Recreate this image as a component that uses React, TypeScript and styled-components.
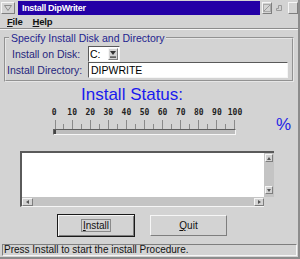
import React from 'react';
import styled, { createGlobalStyle } from 'styled-components';

const BG = '#d3d3d3';
const HI = '#f6f6f6';
const LO = '#7e7e7e';

const GlobalStyle = createGlobalStyle`
  html, body {
    margin: 0;
    padding: 0;
    background: ${BG};
  }
  body {
    font-family: "Liberation Sans", Arial, sans-serif;
  }
`;

const Window = styled.div`
  width: 300px;
  height: 259px;
  box-sizing: border-box;
  background: ${BG};
  display: flex;
  flex-direction: column;
  border-right: 2px solid #8c8c8c;
  border-bottom: 2px solid #8c8c8c;
  overflow: hidden;
`;

const TitleBar = styled.div`
  height: 15px;
  flex: none;
  display: flex;
  align-items: center;
  padding-left: 1px;
`;

const FrameButton = styled.div<{ $w: number; $ml?: number }>`
  width: ${(p) => p.$w}px;
  height: 12px;
  margin-left: ${(p) => p.$ml ?? 0}px;
  box-sizing: border-box;
  display: flex;
  align-items: center;
  justify-content: center;
  border: 1px solid;
  border-color: ${HI} ${LO} ${LO} ${HI};
`;

const TitleText = styled.div`
  width: 243px;
  height: 14px;
  margin-left: 3px;
  box-sizing: border-box;
  background: #2300a6;
  color: #fff;
  font-weight: bold;
  font-size: 9px;
  line-height: 14px;
  padding-left: 4px;
  letter-spacing: -0.3px;
`;

const MenuBar = styled.div`
  height: 13px;
  flex: none;
  display: flex;
  align-items: center;
  gap: 10px;
  padding-left: 7px;
  border-bottom: 1px solid #8c8c8c;
  box-shadow: 0 1px 0 ${HI};
`;

const MenuItem = styled.span`
  font-size: 9.5px;
  font-weight: bold;
  color: #111;
  letter-spacing: -0.2px;

  u {
    text-decoration: underline;
    text-underline-offset: 1px;
  }
`;

const Group = styled.fieldset`
  margin: 3px 4px 0 4px;
  padding: 2px 4px 2px 1px;
  border: 2px groove #e6e6e6;
  display: flex;
  flex-direction: column;
  flex: none;
`;

const Legend = styled.legend`
  margin-left: 2px;
  padding: 0 2px;
  font-size: 10.5px;
  line-height: 12px;
  color: #24248e;
`;

const FieldRow = styled.div`
  display: flex;
  align-items: center;
  height: 16px;
`;

const FieldLabel = styled.label<{ $indent: number }>`
  width: 81px;
  box-sizing: border-box;
  padding-left: ${(p) => p.$indent}px;
  font-size: 10.5px;
  color: #26267c;
  white-space: nowrap;
`;

const Sunken = styled.div`
  box-sizing: border-box;
  height: 16px;
  border: 1px solid;
  border-color: #5a5a5a ${HI} ${HI} #5a5a5a;
  background: #fff;
  display: flex;
  align-items: center;
`;

const Combo = styled(Sunken)`
  width: 32px;
  padding-left: 1px;
  font-size: 10.5px;
  justify-content: space-between;
`;

const ComboArrow = styled.div`
  width: 10px;
  height: 12px;
  box-sizing: border-box;
  margin-right: 1px;
  background: ${BG};
  border: 1px solid;
  border-color: ${HI} ${LO} ${LO} ${HI};
  display: flex;
  align-items: center;
  justify-content: center;
`;

const TextField = styled(Sunken)`
  flex: 1;
  padding-left: 2px;
  font-size: 10.5px;
  color: #000;
`;

const StatusHeading = styled.div`
  margin-top: 3px;
  padding-left: 81px;
  font-size: 17px;
  line-height: 19px;
  color: #1a1aee;
  flex: none;
`;

const ScaleRow = styled.div`
  display: flex;
  align-items: flex-end;
  margin-top: 4px;
  flex: none;
`;

const Scale = styled.div`
  margin-left: 45px;
  display: flex;
  flex-direction: column;
`;

const ScaleLabels = styled.div`
  display: flex;
  height: 10px;
`;

const ScaleNum = styled.span`
  width: 18.1px;
  text-align: center;
  font-family: "DejaVu Sans Mono", "Liberation Mono", monospace;
  font-weight: bold;
  font-size: 8px;
  line-height: 10px;
  color: #222;
`;

const Ticks = styled.svg`
  display: block;
  margin: 2px 0 0 8px;
`;

const Trough = styled.div`
  margin-left: 8px;
  width: 183px;
  height: 6px;
  box-sizing: border-box;
  border: 1px solid;
  border-color: #5e5e5e ${HI} ${HI} #5e5e5e;
  background: #bdbdbd;
  display: flex;
`;

const Thumb = styled.div`
  width: 2px;
  background: #444;
`;

const Percent = styled.span`
  margin: 0 0 2px 32px;
  font-size: 17px;
  line-height: 17px;
  color: #2424e6;
`;

const LogBox = styled.div`
  margin: 16px 24px 0 20px;
  height: 56px;
  flex: none;
  display: grid;
  grid-template-columns: 1fr 10px;
  grid-template-rows: 46px 10px;
`;

const LogArea = styled.div`
  background: #fff;
  border-top: 2px solid #5a5a5a;
  border-left: 2px solid #5a5a5a;
`;

const VScroll = styled.div`
  border-top: 2px solid #5a5a5a;
  background: #c4c4c4;
  display: flex;
  flex-direction: column;
  justify-content: space-between;
  padding: 1px 0 3px 1px;
`;

const HScroll = styled.div`
  background: #c4c4c4;
  border-left: 2px solid #5a5a5a;
  border-bottom: 1px solid ${HI};
  display: flex;
  justify-content: space-between;
  align-items: center;
`;

const Corner = styled.div`
  background: ${BG};
`;

const ArrowBtn = styled.div<{ $w: number; $h: number }>`
  width: ${(p) => p.$w}px;
  height: ${(p) => p.$h}px;
  box-sizing: border-box;
  background: ${BG};
  border: 1px solid;
  border-color: ${HI} ${LO} ${LO} ${HI};
  display: flex;
  align-items: center;
  justify-content: center;
`;

const ButtonRow = styled.div`
  display: flex;
  align-items: center;
  gap: 15px;
  margin-top: 7px;
  padding-left: 57px;
  flex: none;
`;

const Button = styled.button<{ $default?: boolean }>`
  width: ${(p) => (p.$default ? 78 : 77)}px;
  height: ${(p) => (p.$default ? 23 : 21)}px;
  box-sizing: border-box;
  padding: 0;
  font-family: "Liberation Sans", Arial, sans-serif;
  font-size: 10px;
  color: #111;
  background: ${BG};
  border: 1px solid;
  border-color: ${(p) => (p.$default ? '#1a1a1a' : `${HI} ${LO} ${LO} ${HI}`)};
  box-shadow: ${(p) =>
    p.$default ? `inset 1px 1px 0 ${HI}, inset -1px -1px 0 ${LO}` : 'none'};
  display: flex;
  align-items: center;
  justify-content: center;

  u {
    text-underline-offset: 1px;
  }
`;

const Focus = styled.span`
  outline: 1px solid #8a8a8a;
  padding: 0 1px;
`;

const StatusBar = styled.div`
  margin: 7px 1px 0 2px;
  height: 12px;
  flex: none;
  box-sizing: border-box;
  border: 1px solid;
  border-color: ${LO} ${HI} ${HI} ${LO};
  padding-left: 1px;
  font-size: 10px;
  line-height: 10px;
  color: #111;
  white-space: nowrap;
`;

const tickXs = Array.from({ length: 21 }, (_, i) => 2 + i * 8.95);

export default function App() {
  return (
    <>
      <GlobalStyle />
      <Window>
        <TitleBar>
          <FrameButton $w={14}>
            <svg width="8" height="6" viewBox="0 0 8 6">
              <path d="M0.5 0.5h7L4 5.5z" fill="none" stroke="#8a8a8a" />
            </svg>
          </FrameButton>
          <TitleText>Install DipWriter</TitleText>
          <FrameButton $w={10} $ml={2}>
            <svg width="8" height="8" viewBox="0 0 8 8">
              <path d="M1 7L7 1" stroke="#999" />
              <rect x="0.5" y="0.5" width="7" height="7" fill="none" stroke="#aaa" />
            </svg>
          </FrameButton>
          <svg width="8" height="10" viewBox="0 0 8 10" style={{ marginLeft: 4 }}>
            <path d="M2.5 2.5h3v5h-5v-2h2z" fill="none" stroke="#999" />
          </svg>
          <FrameButton $w={10} $ml={4} />
        </TitleBar>

        <MenuBar>
          <MenuItem>
            <u>F</u>ile
          </MenuItem>
          <MenuItem>
            <u>H</u>elp
          </MenuItem>
        </MenuBar>

        <Group>
          <Legend>Specify Install Disk and Directory</Legend>
          <FieldRow>
            <FieldLabel $indent={5}>Install on Disk:</FieldLabel>
            <Combo>
              C:
              <ComboArrow>
                <svg width="6" height="7" viewBox="0 0 6 7">
                  <path d="M0 0h6L3 4z" fill="#333" />
                  <rect x="0" y="5.5" width="6" height="1.2" fill="#333" />
                </svg>
              </ComboArrow>
            </Combo>
          </FieldRow>
          <FieldRow>
            <FieldLabel $indent={0}>Install Directory:</FieldLabel>
            <TextField>DIPWRITE</TextField>
          </FieldRow>
        </Group>

        <StatusHeading>Install Status:</StatusHeading>

        <ScaleRow>
          <Scale>
            <ScaleLabels>
              {[0, 10, 20, 30, 40, 50, 60, 70, 80, 90, 100].map((n) => (
                <ScaleNum key={n}>{n}</ScaleNum>
              ))}
            </ScaleLabels>
            <Ticks width="183" height="9" viewBox="0 0 183 9">
              {tickXs.map((x, i) => (
                <line
                  key={i}
                  x1={x}
                  x2={x}
                  y1={i % 2 === 0 ? 0 : 4}
                  y2={9}
                  stroke="#8a8a8a"
                  strokeWidth="1"
                  shapeRendering="crispEdges"
                />
              ))}
            </Ticks>
            <Trough>
              <Thumb />
            </Trough>
          </Scale>
          <Percent>%</Percent>
        </ScaleRow>

        <LogBox>
          <LogArea />
          <VScroll>
            <ArrowBtn $w={8} $h={8}>
              <svg width="4" height="3" viewBox="0 0 4 3">
                <path d="M0 3L2 0L4 3z" fill="#555" />
              </svg>
            </ArrowBtn>
            <ArrowBtn $w={8} $h={8}>
              <svg width="4" height="3" viewBox="0 0 4 3">
                <path d="M0 0L2 3L4 0z" fill="#555" />
              </svg>
            </ArrowBtn>
          </VScroll>
          <HScroll>
            <ArrowBtn $w={11} $h={8}>
              <svg width="3" height="4" viewBox="0 0 3 4">
                <path d="M3 0L0 2L3 4z" fill="#555" />
              </svg>
            </ArrowBtn>
            <ArrowBtn $w={10} $h={8}>
              <svg width="3" height="4" viewBox="0 0 3 4">
                <path d="M0 0L3 2L0 4z" fill="#555" />
              </svg>
            </ArrowBtn>
          </HScroll>
          <Corner />
        </LogBox>

        <ButtonRow>
          <Button $default>
            <Focus>
              <u>I</u>nstall
            </Focus>
          </Button>
          <Button>
            <u>Q</u>uit
          </Button>
        </ButtonRow>

        <StatusBar>Press Install to start the install Procedure.</StatusBar>
      </Window>
    </>
  );
}
